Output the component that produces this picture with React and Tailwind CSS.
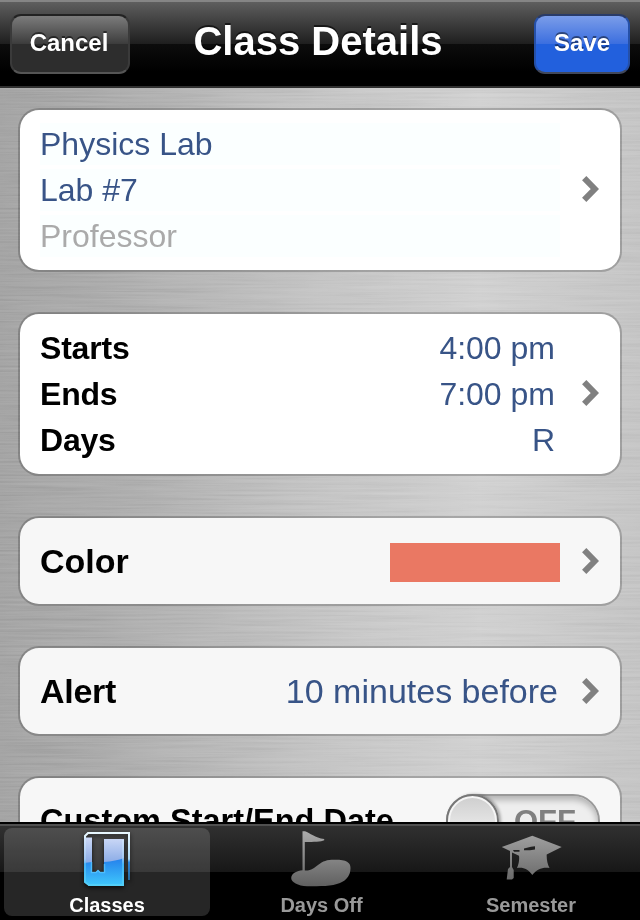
import React from "react";

const details = [
  { label: "Physics Lab", color: "text-[#385487]" },
  { label: "Lab #7", color: "text-[#385487]" },
  { label: "Professor", color: "text-[#aaaaaa]" },
];

const times = [
  { label: "Starts", value: "4:00 pm" },
  { label: "Ends", value: "7:00 pm" },
  { label: "Days", value: "R" },
];

const Chevron = ({ className = "" }) => (
  <svg width="18" height="26" viewBox="0 0 18 26" className={`shrink-0 ${className}`}>
    <path d="M2.200 2.200 L12.800 13 L2.200 23.800" fill="none" stroke="#808080" strokeWidth="6" />
  </svg>
);

const Card = ({ children, className }) => (
  <div
    className={`flex items-center shrink-0 rounded-[21px] border-2 border-black/20 bg-clip-padding px-5 ${className}`}
  >
    {children}
  </div>
);

const BrushedMetal = () => (
  <svg className="absolute inset-0" width="640" height="736">
    <defs>
      <linearGradient id="metal" x1="0" y1="0" x2="1" y2="0">
        <stop offset="0" stopColor="#a5a5a5" />
        <stop offset="0.15" stopColor="#acacac" />
        <stop offset="0.5" stopColor="#c5c5c5" />
        <stop offset="0.75" stopColor="#d1d1d1" />
        <stop offset="1" stopColor="#c5c5c5" />
      </linearGradient>
      <filter id="brush" x="0" y="0" width="100%" height="100%" colorInterpolationFilters="sRGB">
        <feTurbulence type="fractalNoise" baseFrequency="0.009 0.45" numOctaves="3" seed="4" />
        <feColorMatrix values="0.6 0 0 0 0.2  0.6 0 0 0 0.2  0.6 0 0 0 0.2  0 0 0 0 1" />
      </filter>
    </defs>
    <rect width="640" height="736" fill="url(#metal)" />
    <rect width="640" height="736" filter="url(#brush)" className="opacity-40 mix-blend-soft-light" />
  </svg>
);

const BookIcon = () => (
  <svg width="56" height="60" viewBox="0 0 56 60" className="drop-shadow-[0_2px_2px_rgba(0,0,0,0.7)]">
    <defs>
      <linearGradient id="book" x1="0" y1="10" x2="0" y2="36" gradientUnits="userSpaceOnUse">
        <stop offset="0" stopColor="#cbd8f6" />
        <stop offset="1" stopColor="#87a9e6" />
      </linearGradient>
      <linearGradient id="bookLow" x1="0" y1="30" x2="0" y2="57" gradientUnits="userSpaceOnUse">
        <stop offset="0" stopColor="#2480ec" />
        <stop offset="1" stopColor="#3fc6fb" />
      </linearGradient>
      <linearGradient id="edge" x1="0" y1="4" x2="0" y2="58" gradientUnits="userSpaceOnUse">
        <stop offset="0" stopColor="#eaf8ff" />
        <stop offset="0.5" stopColor="#add9f8" />
        <stop offset="0.56" stopColor="#2e86dc" />
        <stop offset="1" stopColor="#245f85" />
      </linearGradient>
      <linearGradient id="pageEdge" x1="0" y1="4" x2="0" y2="58" gradientUnits="userSpaceOnUse">
        <stop offset="0" stopColor="#e4f1ff" />
        <stop offset="0.5" stopColor="#a5cdf5" />
        <stop offset="0.6" stopColor="#4cc0fb" />
        <stop offset="1" stopColor="#5ad2f5" />
      </linearGradient>
    </defs>
    <path d="M5 9.500 H13 V44 H17 L19 42 L21 44 H25 V11 H45 V58 H10 L5 54 Z" fill="url(#book)" />
    <path d="M5 35 L13 34 V44 H17 L19 42 L21 44 H25 V34 Q37 33 45 30 V58 H10 L5 54 Z" fill="url(#bookLow)" />
    <path
      d="M6 10 V54 L10 57 H44 V12"
      fill="none"
      stroke="url(#pageEdge)"
      strokeOpacity="0.75"
      strokeWidth="2"
    />
    <path d="M12.500 34 V44.500 H17 L19 42.500 L21 44.500 H25.500 V36" fill="none" stroke="#55c4ff" strokeWidth="1.5" strokeOpacity="0.8" />
    <path d="M6 10 V8 L9 5 H50 V52" fill="none" stroke="url(#edge)" strokeWidth="2" />
  </svg>
);

const GolfIcon = () => (
  <svg width="64" height="60" viewBox="0 0 64 60">
    <defs>
      <linearGradient id="golf" x1="0" y1="0" x2="0" y2="60" gradientUnits="userSpaceOnUse">
        <stop offset="0" stopColor="#b0b0b0" />
        <stop offset="1" stopColor="#5d5d5d" />
      </linearGradient>
    </defs>
    <path
      d="M12.500 3.300 H15 C20 5 25 10 34.200 11 V12.300 C31 13.800 24 14 14.800 14 V42.500 C21 43 24 40 28 37 C33 33 37 31.700 44 31.700 C56 31.500 60.500 34 60.500 40 C60.500 47 57 52 50 55 C42 58.300 30 58.300 17 58.300 C8 58 1 54 1.200 50 C1.500 45 7 43 12.500 42.300 Z"
      fill="url(#golf)"
    />
  </svg>
);

const CapIcon = () => (
  <svg width="64" height="60" viewBox="0 0 64 60">
    <defs>
      <linearGradient id="cap" x1="0" y1="0" x2="0" y2="60" gradientUnits="userSpaceOnUse">
        <stop offset="0" stopColor="#a8a8a8" />
        <stop offset="1" stopColor="#606060" />
      </linearGradient>
    </defs>
    <path
      d="M33.300 7.700 L62.700 19 L47.700 26.500 C47.500 31 48.500 36 50.500 40 C43 39 38 41.500 33.300 47 C29 41.500 25 39 18 40 C20 36 20.500 31 20 27.700 L13 24.500 V39 L14.700 42 V50 L13 51.500 H7.700 L9 41 L11 39 V23 L2.700 19 Z"
      fill="url(#cap)"
    />
    <path d="M14 22 H20.500 V23.800 H15 Z M25 20.500 L32 18.800 L36 18.300 V21.500 L31 22.200 H25 Z" fill="#202020" />
  </svg>
);

const tabs = [
  { name: "Classes", icon: BookIcon, width: "w-[206px]", active: true },
  { name: "Days Off", icon: GolfIcon, width: "w-[209px]" },
  { name: "Semester", icon: CapIcon, width: "w-[196px]" },
];

const App = () => {
  return (
    <div className="flex flex-col w-[640px] h-[920px] overflow-hidden font-['Liberation_Sans',Arial,sans-serif]">
      {/* Navigation bar */}
      <header className="flex items-center justify-between h-[88px] shrink-0 px-[10px] border-t-2 border-t-[#858585] border-b-2 border-b-[#303030] bg-[linear-gradient(#5e5e5e_0px,#1e1e1e_42px,#0c0c0c_42px,#000_70px)]">
        <button className="w-[120px] h-[60px] pb-[2px] pr-[2px] rounded-[11px] border-2 border-t-[#222] border-x-[#3a3a3a] border-b-[#555] bg-[linear-gradient(#7c7c7c,#3c3c3c_50%,#2d2d2d_50%,#2d2d2d)] text-white text-2xl font-bold [text-shadow:0_-2px_0_rgba(0,0,0,0.5)]">
          Cancel
        </button>
        <h1 className="text-white text-[40px] leading-none font-bold -ml-[28px] pb-[6px] [text-shadow:0_-2px_0_rgba(0,0,0,0.6)]">
          Class Details
        </h1>
        <button className="w-24 h-[60px] pb-[2px] rounded-[11px] border-2 border-t-[#293b68] border-x-[#2550a8] border-b-[#41485b] bg-[linear-gradient(#7b9de9,#3b6edf_50%,#2260dd_50%,#2260dd)] text-white text-2xl font-bold [text-shadow:0_-2px_0_rgba(0,0,0,0.45)]">
          Save
        </button>
      </header>

      {/* Form */}
      <main className="relative flex-1 overflow-hidden">
        <BrushedMetal />
        <div className="relative flex flex-col gap-10 px-[18px] pt-5">
          <Card className="h-[164px] bg-white">
            <div className="flex flex-col gap-1 w-[520px] mr-auto text-[32px]">
              {details.map((item) => (
                <div key={item.label} className={`h-[42px] leading-[42px] bg-[#fbffff] ${item.color}`}>
                  {item.label}
                </div>
              ))}
            </div>
            <Chevron className="mb-[2px]" />
          </Card>

          <Card className="h-[164px] bg-white">
            <div className="flex flex-col gap-1 w-[515px] mr-auto text-[32px]">
              {times.map((item) => (
                <div key={item.label} className="flex justify-between h-[42px] leading-[42px]">
                  <span className="font-bold text-black tracking-[-0.2px]">{item.label}</span>
                  <span className="text-[#385487]">{item.value}</span>
                </div>
              ))}
            </div>
            <Chevron className="mb-[2px]" />
          </Card>

          <Card className="h-[90px] bg-[#f7f7f7] text-[34px]">
            <span className="font-bold text-black">Color</span>
            <div className="w-[170px] h-[39px] mt-[3px] ml-auto mr-[22px] bg-[#ea7863]" />
            <Chevron />
          </Card>

          <Card className="h-[90px] bg-[#f7f7f7] text-[34px]">
            <span className="font-bold text-black tracking-[-0.3px]">Alert</span>
            <span className="ml-auto mr-6 text-[#385487]">10 minutes before</span>
            <Chevron />
          </Card>

          <Card className="h-[90px] bg-[#f7f7f7]">
            <span className="font-bold text-black text-[32.5px]">Custom Start/End Date</span>
            <div className="flex items-center w-[154px] h-[54px] ml-auto rounded-full border-2 border-[#999] bg-[#eeeeee] shadow-[inset_0_4px_6px_rgba(0,0,0,0.25)]">
              <div className="w-[53px] h-[54px] -ml-[2px] shrink-0 rounded-full border-2 border-[#777] bg-linear-to-b from-[#cecece] to-[#f8f8f8] shadow-[inset_0_0_0_2px_#f5f5f5,2px_0_3px_rgba(0,0,0,0.3)]" />
              <span className="ml-[15px] text-[31px] leading-none font-bold text-[#808080]">OFF</span>
            </div>
          </Card>
        </div>
      </main>

      {/* Tab bar */}
      <nav className="flex gap-[7px] h-[98px] shrink-0 px-1 pt-1 border-t-2 border-black bg-[linear-gradient(#505050_0px,#505050_2px,#303030_2px,#171717_48px,#000_48px)]">
        {tabs.map(({ name, icon: Icon, width, active }) => (
          <div
            key={name}
            className={`flex flex-col items-center h-[88px] rounded-lg ${width} ${
              active ? "bg-white/15 text-white" : "text-[#999]"
            }`}
          >
            <Icon />
            <span className="mt-[6px] text-xl leading-[22px] font-bold">{name}</span>
          </div>
        ))}
      </nav>
    </div>
  );
};

export default App;
